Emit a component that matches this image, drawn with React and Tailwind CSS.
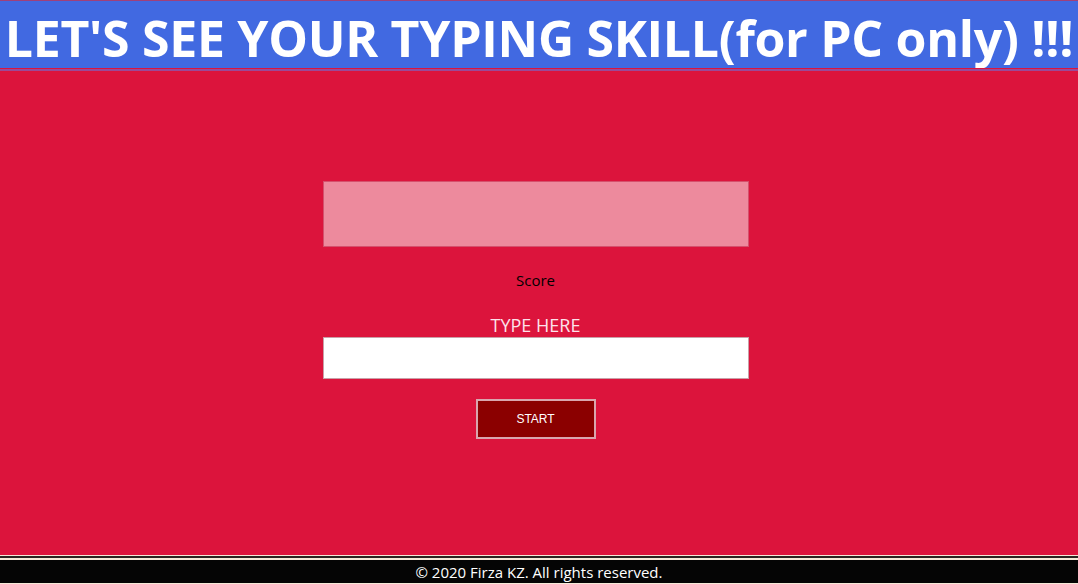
import React from 'react';

const App = () => {
  return (
    <div className="w-[1078px] h-[584px] flex flex-col bg-[#dc143c] overflow-hidden" style={{ fontFamily: '"Open Sans", "Noto Sans", sans-serif' }}>
      <header className="h-[68px] bg-[#4169e1] border-t border-[#a0407a] flex items-center justify-center pt-[6px]">
        <h1 className="text-[50px] font-bold text-white leading-none tracking-[-0.3px] whitespace-nowrap">
          LET'S SEE YOUR TYPING SKILL(for PC only) !!!
        </h1>
      </header>
      <div className="h-[1px] bg-[#dc143c]" />
      <div className="h-[2px] bg-[#9a4a98]" />

      <main className="flex-1 flex flex-col items-center pr-[7px] pt-[110px]">
        <div className="w-[426px] h-[66px] bg-[#ed8a9d] border border-[#d5506c]" />
        <p className="mt-[23px] text-[15px] text-black leading-5">Score</p>
        <p className="mt-[23px] text-[18px] text-[#fde2ea] leading-6">TYPE HERE</p>
        <input
          type="text"
          className="mt-0 w-[426px] h-[42px] bg-white border border-[#c9a0a8] outline-none px-2"
        />
        <button className="mt-[20px] w-[120px] h-[40px] bg-[#8b0000] border-2 border-[#d9a6ae] text-white text-[12px]" style={{ fontFamily: '"Liberation Sans", Arial, sans-serif' }}>
          START
        </button>
      </main>

      <footer>
        <div className="h-[1px] bg-[#f6ead8]" />
        <div className="h-[2px] bg-[#2a2420]" />
        <div className="h-[2px] bg-[#f6ead8]" />
        <div className="h-[23px] bg-[#050505] flex items-center justify-center">
          <span className="text-[15px] text-white leading-none mt-[2px]">© 2020 Firza KZ. All rights reserved.</span>
        </div>
        <div className="h-[1px] bg-[#f6ead8]" />
      </footer>
    </div>
  );
};

export default App;
